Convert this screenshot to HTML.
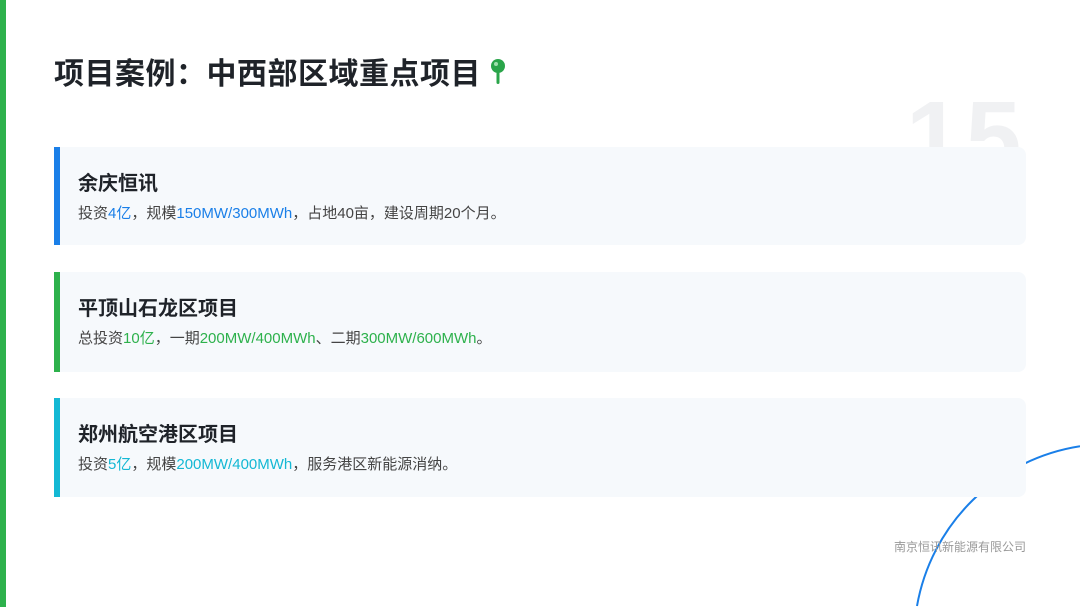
<!DOCTYPE html>
<html style="overflow:hidden;width:1080px;height:607px"><head><meta charset="utf-8"><style>
*{margin:0;padding:0;box-sizing:border-box}
body{width:1080px;height:607px;overflow:hidden;background:#fff;position:relative;font-family:"Liberation Sans","Noto Sans CJK SC",sans-serif;color:#1f2329}
.bar{position:absolute;left:0;top:0;width:6px;height:607px;background:#2db14c}
h1{position:absolute;left:54px;top:55px;font-size:30px;font-weight:700;line-height:40px;letter-spacing:0.5px}
.num{position:absolute;left:906px;top:82px;font-size:100px;font-weight:700;color:#f0f1f3;line-height:110px;letter-spacing:4px}
.circ{position:absolute;left:0;top:0;display:block}
.card{position:absolute;left:54px;width:972px;background:#f6f9fc;border-radius:0 8px 8px 0;border-left:6px solid}
.card h2{position:absolute;left:18px;top:24px;font-size:20px;font-weight:700;line-height:26px}
.card p{position:absolute;left:18px;top:57px;font-size:15px;line-height:20px;color:#444}
.foot{position:absolute;right:54px;top:538px;font-size:12px;color:#999}
</style></head><body>
<div class="bar"></div>
<div class="num">15</div>
<svg class="circ" width="1080" height="607"><path d="M1080 446.3 A196 196 0 0 0 917 606" fill="none" stroke="#1a7fe8" stroke-width="2"/></svg>
<h1>项目案例：中西部区域重点项目 <svg width="16" height="28" viewBox="0 0 16 28" style="vertical-align:-2px"><circle cx="8" cy="8" r="7" fill="#2aa54a"/><circle cx="6" cy="6" r="2" fill="#9ee0ac"/><rect x="6.5" y="14" width="3" height="12" rx="1.5" fill="#2aa54a"/></svg></h1>
<div class="card" style="top:147px;height:98px;border-color:#1a7fe8"><h2>余庆恒讯</h2><p>投资<span style="color:#1a7fe8">4亿</span>，规模<span style="color:#1a7fe8">150MW/300MWh</span>，占地40亩，建设周期20个月。</p></div>
<div class="card" style="top:272px;height:100px;border-color:#2db14c"><h2>平顶山石龙区项目</h2><p>总投资<span style="color:#2db14c">10亿</span>，一期<span style="color:#2db14c">200MW/400MWh</span>、二期<span style="color:#2db14c">300MW/600MWh</span>。</p></div>
<div class="card" style="top:398px;height:99px;border-color:#14b8d4"><h2>郑州航空港区项目</h2><p>投资<span style="color:#14b8d4">5亿</span>，规模<span style="color:#14b8d4">200MW/400MWh</span>，服务港区新能源消纳。</p></div>
<div class="foot">南京恒讯新能源有限公司</div>
</body></html>
